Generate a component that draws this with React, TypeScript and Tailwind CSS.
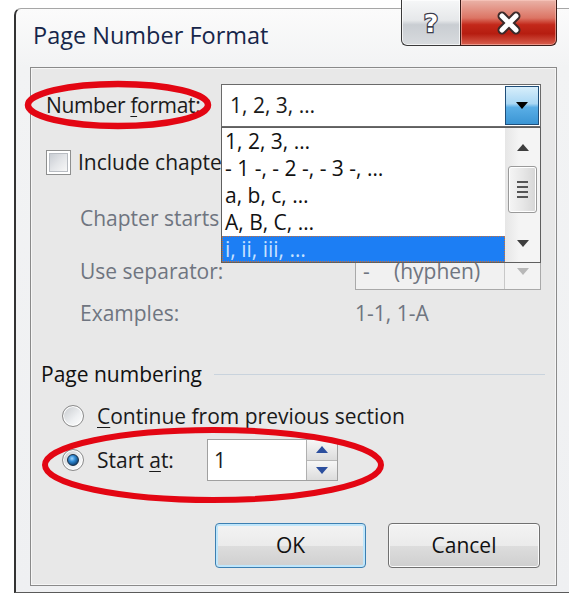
import React from "react";

function DownTriangle({ className = "" }: { className?: string }) {
  return (
    <svg width="12" height="7" viewBox="0 0 12 7" className={className}>
      <path d="M0 0 H12 L6 7 Z" fill="currentColor" />
    </svg>
  );
}

function UpTriangle({ className = "" }: { className?: string }) {
  return (
    <svg width="12" height="7" viewBox="0 0 12 7" className={className}>
      <path d="M0 7 H12 L6 0 Z" fill="currentColor" />
    </svg>
  );
}

function CaptionButtons() {
  return (
    <div className="-mt-[9px] mr-[27px] ml-auto flex h-[46px]">
      <div className="flex w-[59px] items-center justify-center rounded-bl-[6px] border border-r-0 border-t-0 border-[#3a3a3a] bg-[linear-gradient(180deg,#f6f7f8_0%,#e6e8ea_45%,#c9cdd2_55%,#d8dbde_100%)] shadow-[inset_0_0_0_1px_rgba(255,255,255,0.7)]">
        <svg width="26" height="30" viewBox="0 0 26 30">
          <text
            x="13"
            y="24"
            textAnchor="middle"
            fontFamily="'DejaVu Sans', sans-serif"
            fontWeight="bold"
            fontSize="25"
            fill="#ffffff"
            stroke="#3b3b4a"
            strokeWidth="2.4"
            paintOrder="stroke"
          >
            ?
          </text>
        </svg>
      </div>
      <div className="flex w-[97px] items-center justify-center rounded-br-[6px] border border-t-0 border-[#3a1c18] bg-[linear-gradient(180deg,#eab3a8_0%,#dc7464_40%,#c3281a_55%,#b61d10_75%,#d9604f_100%)] shadow-[inset_0_0_0_1px_rgba(255,210,200,0.5)]">
        <svg width="30" height="26" viewBox="0 0 30 26">
          <path d="M8 6 L22 20 M22 6 L8 20" stroke="#3a2a2a" strokeWidth="9" strokeLinecap="round" />
          <path d="M8 6 L22 20 M22 6 L8 20" stroke="#ffffff" strokeWidth="5" strokeLinecap="round" />
        </svg>
      </div>
    </div>
  );
}

function Checkbox() {
  return (
    <div className="flex h-[25px] w-[25px] shrink-0 items-center justify-center border border-[#8e8f8f] bg-white">
      <div className="h-[19px] w-[19px] border border-[#b8bcc2] bg-[linear-gradient(135deg,#c9cdd3_0%,#e3e5e8_50%,#f7f7f7_100%)]" />
    </div>
  );
}

function Radio({ checked }: { checked?: boolean }) {
  return (
    <div className="flex h-[22px] w-[22px] shrink-0 items-center justify-center rounded-full border border-[#8b8b8b] bg-[linear-gradient(135deg,#c6c9cd_0%,#eef0f2_60%,#ffffff_100%)] shadow-[inset_0_0_0_1px_#ffffff]">
      {checked && (
        <div className="h-[12px] w-[12px] rounded-full border border-[#1b2f45] bg-[radial-gradient(circle_at_40%_35%,#9fd6ff_0%,#2f8ad4_35%,#0d3d6e_80%)]" />
      )}
    </div>
  );
}

function NumberList() {
  const items = ["1, 2, 3, …", "- 1 -, - 2 -, - 3 -, …", "a, b, c, …", "A, B, C, …"];
  return (
    <div className="absolute left-[190px] top-[59px] flex h-[136px] w-[320px] border border-[#5f5f5f] bg-white">
      <div className="flex flex-1 flex-col">
        {items.map((t) => (
          <div key={t} className="flex h-[27px] items-center pl-[3px] text-[#111]">
            <span className="leading-none">{t}</span>
          </div>
        ))}
        <div className="flex h-[26px] items-center border border-dotted border-[#c8703a] bg-[#1c7ef4] pl-[2px] text-[#c7e1ff]">
          <span className="leading-none">i, ii, iii, …</span>
        </div>
      </div>
      <div className="flex w-[35px] flex-col items-center bg-[linear-gradient(90deg,#e6e6e6_0%,#f4f4f4_40%,#f4f4f4_100%)]">
        <div className="flex h-[38px] items-center justify-center text-[#3e3e3e]">
          <UpTriangle />
        </div>
        <div className="flex h-[47px] w-[29px] flex-col items-center justify-center gap-[3px] rounded-[3px] border border-[#9a9a9a] bg-[linear-gradient(90deg,#f5f5f5_0%,#e7e7e7_50%,#d6d6d6_100%)] shadow-[inset_0_0_0_1px_#ffffff]">
          <div className="h-[2px] w-[11px] bg-[#555]" />
          <div className="h-[2px] w-[11px] bg-[#555]" />
          <div className="h-[2px] w-[11px] bg-[#555]" />
          <div className="h-[2px] w-[11px] bg-[#555]" />
        </div>
        <div className="flex-1" />
        <div className="flex h-[37px] items-center justify-center text-[#3e3e3e]">
          <DownTriangle />
        </div>
      </div>
    </div>
  );
}

export default function App() {
  return (
    <div className="relative h-[593px] w-[569px] overflow-hidden bg-white font-['Open_Sans','Noto_Sans',sans-serif] text-[21px] text-[#1a1a1a]">
      <div className="pl-[14px] pt-[8px]">
        <div className="h-[585px] w-[570px] rounded-tl-[7px] border-b border-l-2 border-t border-b-[#5a5a5a] border-l-[#333] border-t-[#a6a6a6] bg-[linear-gradient(180deg,#fbfbfb_0%,#f2f3f4_10%,#eff0f2_100%)]">
          {/* caption bar */}
          <div className="flex h-[58px]">
            <div className="pl-[17px] pt-[15px] text-[23.5px] leading-none text-[#16264a]">Page Number Format</div>
            <CaptionButtons />
          </div>

          {/* client area */}
          <div className="relative ml-[14px] flex h-[519px] w-[527px] flex-col border border-[#8a8a8a] bg-[#e8e8e8] shadow-[inset_0_0_0_1px_#f6f6f6]">
            {/* number format */}
            <div className="mt-[16px] flex h-[43px] items-center">
              <div className="w-[190px] pl-[15px] leading-none tracking-[-0.35px]">
                Number <span className="underline decoration-1 underline-offset-[3px]">f</span>ormat:
              </div>
              <div className="flex h-[43px] w-[320px] items-center border border-[#6a6a6a] bg-white">
                <span className="flex-1 pl-[8px] leading-none">1, 2, 3, …</span>
                <div className="mr-[1px] flex h-[39px] w-[34px] items-center justify-center border border-[#1f4e79] bg-[linear-gradient(180deg,#d7eefb_0%,#a9d7f4_45%,#5aaee6_55%,#3b95d4_100%)] text-black">
                  <DownTriangle />
                </div>
              </div>
            </div>

            {/* include chapter number (its tail sits under the open list) */}
            <div className="mt-[22px] flex h-[26px] w-[190px] items-center overflow-hidden pl-[15px]">
              <Checkbox />
              <span className="ml-[7px] whitespace-nowrap leading-none">Include chapte</span>
            </div>

            {/* chapter starts with style */}
            <div className="mt-[25px] flex h-[36px] w-[190px] items-center overflow-hidden text-[#6f7580]">
              <div className="whitespace-nowrap pl-[49px] leading-none">Chapter starts</div>
            </div>

            {/* separator */}
            <div className="mt-[17px] flex h-[37px] items-center text-[#6f7580]">
              <div className="w-[324px] pl-[49px] leading-none">Use separator:</div>
              <div className="flex h-[37px] w-[186px] items-center border border-[#a9a9a9] bg-[#f1f1f1]">
                <span className="w-[38px] pl-[7px] leading-none">-</span>
                <span className="flex-1 leading-none">(hyphen)</span>
                <div className="flex h-full w-[36px] items-center justify-center border-l border-[#c8c8c8] bg-[#f3f3f3] text-[#b8b8b8]">
                  <DownTriangle />
                </div>
              </div>
            </div>

            {/* examples */}
            <div className="mt-[11px] flex h-[24px] items-center text-[#6f7580]">
              <div className="w-[324px] pl-[49px] leading-none">Examples:</div>
              <div className="leading-none">1-1, 1-A</div>
            </div>

            {/* page numbering group */}
            <div className="mt-[37px] flex h-[24px] items-center pl-[10px]">
              <span className="leading-none text-[#101010]">Page numbering</span>
              <div className="ml-[12px] mr-[11px] h-px flex-1 bg-[#c9d3dd]" />
            </div>

            <div className="mt-[18px] flex h-[24px] items-center pl-[31px]">
              <Radio />
              <span className="ml-[13px] leading-none">
                <span className="underline decoration-1 underline-offset-[3px]">C</span>ontinue from previous section
              </span>
            </div>

            <div className="mt-[10px] flex h-[44px] items-center pl-[31px]">
              <Radio checked />
              <span className="ml-[13px] w-[110px] leading-none">
                Start <span className="underline decoration-1 underline-offset-[3px]">a</span>t:
              </span>
              <div className="flex h-[42px] w-[131px] items-center border border-[#a0a0a0] bg-white">
                <span className="flex-1 pl-[6px] leading-none">1</span>
                <div className="flex h-full w-[31px] flex-col border-l border-[#b0b0b0]">
                  <div className="flex flex-1 items-center justify-center border-b border-[#b8b8b8] bg-[linear-gradient(180deg,#f7f7f7_0%,#dcdcdc_100%)] text-[#2c4f9e]">
                    <UpTriangle />
                  </div>
                  <div className="flex flex-1 items-center justify-center bg-[linear-gradient(180deg,#f7f7f7_0%,#dcdcdc_100%)] text-[#2c4f9e]">
                    <DownTriangle />
                  </div>
                </div>
              </div>
            </div>

            {/* dialog buttons */}
            <div className="mt-[41px] flex h-[45px] pl-[184px]">
              <button className="flex h-[45px] w-[151px] items-center justify-center rounded-[4px] border border-[#3c7fb1] bg-[linear-gradient(180deg,#f3f3f3_0%,#ebebeb_50%,#dddddd_51%,#cfcfcf_100%)] shadow-[inset_0_0_0_2px_#bfe6fb] leading-none text-[#111]">
                OK
              </button>
              <button className="ml-[22px] flex h-[45px] w-[152px] items-center justify-center rounded-[4px] border border-[#707070] bg-[linear-gradient(180deg,#f3f3f3_0%,#ebebeb_50%,#dddddd_51%,#cfcfcf_100%)] shadow-[inset_0_0_0_1px_#fbfbfb] leading-none text-[#111]">
                Cancel
              </button>
            </div>

            <NumberList />
          </div>
        </div>
      </div>

      {/* red annotation ellipses */}
      <svg className="pointer-events-none absolute left-0 top-0" width="569" height="593" viewBox="0 0 569 593">
        <ellipse cx="118" cy="105" rx="90" ry="21" fill="none" stroke="#e30613" strokeWidth="6.5" />
        <ellipse cx="213" cy="465" rx="168" ry="35" fill="none" stroke="#e30613" strokeWidth="6" />
      </svg>
    </div>
  );
}
